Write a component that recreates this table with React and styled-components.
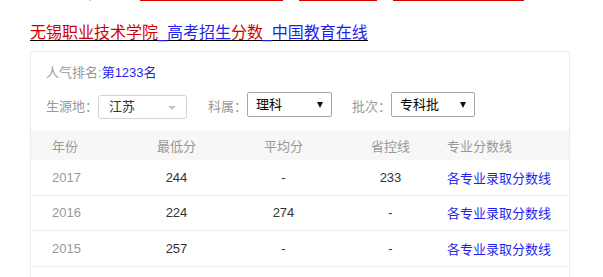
import React from 'react';
import styled, { createGlobalStyle } from 'styled-components';

const GlobalStyle = createGlobalStyle`
    body {
        margin: 0;
        background: #fff;
        font-family: "Liberation Sans", "Noto Sans CJK SC", sans-serif;
    }
`

const Page = styled.div`
    width: 603px;
    height: 277px;
    overflow: hidden;
`

const TopStrip = styled.div`
    display: flex;
    height: 1px;
`

const StripMark = styled.div`
    height: 1px;
    width: ${p => p.w}px;
    margin-left: ${p => p.gap}px;
    background: ${p => p.color || '#d40000'};
`

const Title = styled.a`
    display: block;
    margin: 22px 0 0 30px;
    font-size: 16px;
    line-height: 20px;
    height: 20px;
    text-decoration: underline;
    text-underline-offset: 2px;
    white-space: nowrap;
`

const Hl = styled.span`
    color: ${p => p.red ? '#d40000' : '#1f1fee'};
`

const Panel = styled.div`
    margin: 8px 0 0 30px;
    width: 540px;
    height: 240px;
    box-sizing: border-box;
    border: 1px solid #ececec;
    border-bottom: none;
`

const Info = styled.div`
    padding: 11px 15px 11px 15px;
`

const Rank = styled.div`
    font-size: 13px;
    line-height: 20px;
    color: #999;
    span {
        color: #1f1fee;
    }
`

const Filters = styled.div`
    display: flex;
    align-items: flex-start;
    margin-top: 9px;
    height: 27px;
`

const Field = styled.div`
    display: flex;
    align-items: flex-start;
    margin-right: ${p => p.mr || 0}px;
`

const Label = styled.span`
    font-size: 13px;
    line-height: 24px;
    margin-top: 3px;
    color: #999;
    white-space: nowrap;
`

const Select = styled.div`
    position: relative;
    box-sizing: border-box;
    width: ${p => p.w}px;
    height: ${p => p.native ? 25 : 24}px;
    margin-top: ${p => p.native ? 0 : 3}px;
    border: 1px solid ${p => p.native ? '#a6a6a6' : '#d4d4d4'};
    border-radius: ${p => p.native ? 2 : 3}px;
    padding-left: ${p => p.native ? 8 : 10}px;
    font-size: 13px;
    line-height: ${p => p.native ? 23 : 22}px;
    color: ${p => p.native ? '#000' : '#333'};
`

const Arrow = styled.i`
    position: absolute;
    top: 50%;
    right: ${p => p.native ? 8 : 10}px;
    width: 0;
    height: 0;
    margin-top: ${p => p.native ? -3 : -1}px;
    border-left: ${p => p.native ? 3 : 4}px solid transparent;
    border-right: ${p => p.native ? 3 : 4}px solid transparent;
    border-top: ${p => p.native ? 6 : 4}px solid ${p => p.native ? '#111' : '#c8c8c8'};
`

const Row = styled.div`
    display: grid;
    grid-template-columns: 92px 107px 107px 107px 1fr;
    align-items: center;
    height: ${p => p.head ? '30px' : '35.5px'};
    box-sizing: border-box;
    background: ${p => p.head ? '#f7f7f7' : '#fff'};
    border-bottom: ${p => p.head ? 'none' : '1px solid #ececec'};
    font-size: 13px;
`

const Cell = styled.div`
    text-align: ${p => p.left ? 'left' : 'center'};
    padding-left: ${p => p.pl || 0}px;
    color: ${p => p.muted ? '#999' : p.link ? '#1f1fee' : '#333'};
    white-space: nowrap;
`

const rows = [
    ['2017', '244', '-', '233'],
    ['2016', '224', '274', '-'],
    ['2015', '257', '-', '-'],
]

function App() {
    return (
        <Page>
            <GlobalStyle />
            <TopStrip>
                <StripMark gap={89} w={2} color='#c9d0de' />
                <StripMark gap={49} w={143} />
                <StripMark gap={16} w={78} />
                <StripMark gap={16} w={131} />
            </TopStrip>
            <Title>
                <Hl red>无锡职业技术学院</Hl>
                <Hl>_高考招生</Hl>
                <Hl red>分数</Hl>
                <Hl>_中国教育在线</Hl>
            </Title>
            <Panel>
                <Info>
                    <Rank>人气排名:<span>第1233名</span></Rank>
                    <Filters>
                        <Field mr={21}>
                            <Label>生源地：</Label>
                            <Select w={89}>江苏<Arrow /></Select>
                        </Field>
                        <Field mr={20}>
                            <Label>科属：</Label>
                            <Select native w={85}>理科<Arrow native /></Select>
                        </Field>
                        <Field>
                            <Label>批次：</Label>
                            <Select native w={84}>专科批<Arrow native /></Select>
                        </Field>
                    </Filters>
                </Info>
                <Row head>
                    <Cell left pl={21} muted>年份</Cell>
                    <Cell muted>最低分</Cell>
                    <Cell muted>平均分</Cell>
                    <Cell muted>省控线</Cell>
                    <Cell left pl={3} muted>专业分数线</Cell>
                </Row>
                {rows.map(r => (
                    <Row key={r[0]}>
                        <Cell left pl={21} muted>{r[0]}</Cell>
                        <Cell>{r[1]}</Cell>
                        <Cell>{r[2]}</Cell>
                        <Cell>{r[3]}</Cell>
                        <Cell left pl={3} link>各专业录取分数线</Cell>
                    </Row>
                ))}
            </Panel>
        </Page>
    );
}

export default App;
